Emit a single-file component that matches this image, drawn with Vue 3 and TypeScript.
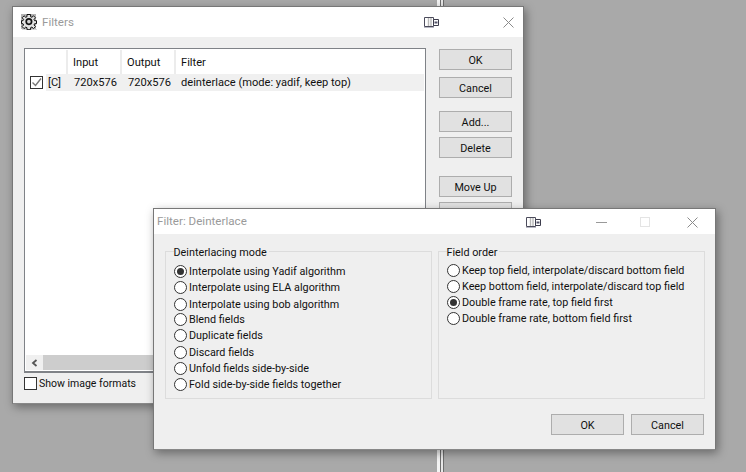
<script setup lang="ts">
interface Choice { label: string; checked: boolean }
const modes: Choice[] = [
  { label: 'Interpolate using Yadif algorithm', checked: true },
  { label: 'Interpolate using ELA algorithm', checked: false },
  { label: 'Interpolate using bob algorithm', checked: false },
  { label: 'Blend fields', checked: false },
  { label: 'Duplicate fields', checked: false },
  { label: 'Discard fields', checked: false },
  { label: 'Unfold fields side-by-side', checked: false },
  { label: 'Fold side-by-side fields together', checked: false },
]
const orders: Choice[] = [
  { label: 'Keep top field, interpolate/discard bottom field', checked: false },
  { label: 'Keep bottom field, interpolate/discard top field', checked: false },
  { label: 'Double frame rate, top field first', checked: true },
  { label: 'Double frame rate, bottom field first', checked: false },
]
</script>

<template>
  <div class="desktop">
    <div class="strip"></div>

    <section class="window filters">
      <header class="titlebar">
        <svg class="gear" width="16" height="16" viewBox="0 0 16 16">
          <rect x="0" y="0" width="15" height="15" fill="#b4b4b4" />
          <rect x="1" y="15" width="15" height="1" fill="#d8d8d8" />
          <path d="M6 1h3.600v2.200l1.300.6 1.600-1.500 2 2-1.500 1.600.6 1.300H15.500v3h-1.900l-.6 1.300 1.500 1.600-2 2-1.600-1.500-1.300.6v2H6v-2l-1.300-.6-1.600 1.500-2-2 1.500-1.600-.6-1.300H.5v-3h1.500l.6-1.300-1.500-1.600 2-2 1.600 1.500 1.300-.6z" transform="translate(0 -.5)" fill="#e2e2e2" stroke="#111" stroke-width="1" />
          <circle cx="7.900" cy="7.600" r="2.700" fill="#d4d4d4" stroke="#111" stroke-width="1.700" />
        </svg>
        <span class="title-text">Filters</span>
        <svg class="pin" width="16" height="11" viewBox="0 0 16 11">
          <path d="M1.500.5h9v9h-9z" fill="#fff" stroke="#4c4c5c" />
          <path d="M1 10.500h10" stroke="#b9b9c4" />
          <path d="M5.500 1v8M8 1v8" stroke="#b8b8b8" stroke-width="1.400" />
          <path d="M10.500 2.500h5v6h-5z" fill="#fff" stroke="#3c3c4c" />
          <path d="M11.500 4.500h3v2h-3z" fill="#55556a" />
        </svg>
        <svg class="close" width="11" height="11" viewBox="0 0 11 11">
          <path d="M.5.5l10 10M10.500.5l-10 10" stroke="#8a8a8a" fill="none" />
        </svg>
      </header>

      <div class="filters-body">
        <div class="list-column">
          <div class="list">
            <div class="list-head">
              <span class="col col-check"></span>
              <span class="col col-size">Input</span>
              <span class="col col-size">Output</span>
              <span class="col col-name">Filter</span>
            </div>
            <div class="list-row">
              <span class="row-check">
                <span class="checkbox">
                  <svg width="11" height="11" viewBox="0 0 11 11">
                    <path d="M1.500 5.500l3 3 5.500-7" fill="none" stroke="#777" stroke-width="1.400" />
                  </svg>
                </span>
              </span>
              <span class="row-body">
                <span class="cell-flag">[C]</span>
                <span class="cell-size">720x576</span>
                <span class="cell-size">720x576</span>
                <span class="cell-name">deinterlace (mode: yadif, keep top)</span>
              </span>
            </div>
            <div class="list-space"></div>
            <div class="hscroll">
              <span class="scroll-arrow">
                <svg width="7" height="8" viewBox="0 0 7 8">
                  <path d="M5.500 1L2 4l3.500 3" fill="none" stroke="#555" stroke-width="1.800" />
                </svg>
              </span>
              <span class="scroll-thumb"></span>
            </div>
          </div>
          <label class="show-formats">
            <span class="checkbox"></span>
            <span>Show image formats</span>
          </label>
        </div>

        <div class="side-buttons">
          <button class="btn first">OK</button>
          <button class="btn gap-ok">Cancel</button>
          <button class="btn gap-add">Add...</button>
          <button class="btn gap-del">Delete</button>
          <button class="btn gap-move">Move Up</button>
          <button class="btn gap-del">Move Down</button>
        </div>
      </div>
    </section>

    <section class="window deinterlace">
      <header class="titlebar small">
        <span class="title-text plain">Filter: Deinterlace</span>
        <svg class="pin two" width="16" height="11" viewBox="0 0 16 11">
          <path d="M1.500.5h9v9h-9z" fill="#fff" stroke="#4c4c5c" />
          <path d="M1 10.500h10" stroke="#b9b9c4" />
          <path d="M5.500 1v8M8 1v8" stroke="#b8b8b8" stroke-width="1.400" />
          <path d="M10.500 2.500h5v6h-5z" fill="#fff" stroke="#3c3c4c" />
          <path d="M11.500 4.500h3v2h-3z" fill="#55556a" />
        </svg>
        <span class="minimize"></span>
        <span class="maximize"></span>
        <svg class="close two" width="11" height="11" viewBox="0 0 11 11">
          <path d="M.5.5l10 10M10.500.5l-10 10" stroke="#8a8a8a" fill="none" />
        </svg>
      </header>

      <div class="groups">
        <fieldset class="group mode-group">
          <legend>Deinterlacing mode</legend>
          <div class="radio-list mode-list">
            <div v-for="m in modes" :key="m.label" class="radio-row">
              <span class="radio" :class="{ on: m.checked }"></span>
              <span>{{ m.label }}</span>
            </div>
          </div>
        </fieldset>
        <fieldset class="group order-group">
          <legend>Field order</legend>
          <div class="radio-list order-list">
            <div v-for="o in orders" :key="o.label" class="radio-row">
              <span class="radio" :class="{ on: o.checked }"></span>
              <span>{{ o.label }}</span>
            </div>
          </div>
        </fieldset>
      </div>

      <footer class="dialog-actions">
        <button class="btn">OK</button>
        <button class="btn">Cancel</button>
      </footer>
    </section>
  </div>
</template>

<style>
html, body { margin: 0; padding: 0; background: #a9a9a9; }
</style>

<style scoped>
.desktop {
  position: relative;
  width: 746px;
  height: 472px;
  overflow: hidden;
  background: #a9a9a9;
  font-family: Roboto, sans-serif;
  font-size: 10.8px;
  color: #101010;
}
.strip {
  position: absolute;
  left: 437px;
  top: 0;
  width: 8px;
  height: 472px;
  background: linear-gradient(90deg, #f4f4f4 0 3px, #6e6e6e 3px 4px, #e8e8e8 4px 6px, #6e6e6e 6px 7px, #a9a9a9 7px);
}
.window {
  position: absolute;
  box-sizing: border-box;
  display: flex;
  flex-direction: column;
  background: #efefef;
  border: 1px solid #777;
  border-bottom-color: #888;
  box-shadow: 2px 3px 9px rgba(0, 0, 0, 0.38);
}
.filters { left: 12px; top: 6px; width: 512px; height: 398px; }
.deinterlace { left: 153px; top: 208px; width: 563px; height: 242px; }

.titlebar {
  position: relative;
  display: flex;
  align-items: center;
  height: 30px;
  background: #fff;
  flex: none;
}
.titlebar.small { height: 25px; padding-bottom: 1px; box-sizing: border-box; }
.gear { margin-left: 8px; flex: none; }
.title-text { margin-left: 5px; font-size: 11.6px; color: #9a9a9a; }
.title-text.plain { margin-left: 3px; }
.pin { position: absolute; left: 410px; top: 10px; }
.close { position: absolute; left: 490px; top: 10px; }
.pin.two { left: 371px; top: 8px; }
.close.two { left: 533px; top: 8px; }
.minimize {
  position: absolute;
  left: 442px;
  top: 13px;
  width: 11px;
  height: 1px;
  background: #999;
}
.maximize {
  position: absolute;
  left: 486px;
  top: 8px;
  width: 8px;
  height: 8px;
  border: 1px solid #e4e4e4;
}

.filters-body {
  display: flex;
  padding: 11px 0 0 11px;
  flex: 1;
  min-height: 0;
}
.list-column { width: 402px; display: flex; flex-direction: column; }
.list {
  box-sizing: border-box;
  display: flex;
  flex-direction: column;
  height: 325px;
  border: 1px solid #7f8287;
  border-bottom-width: 2px;
  background: #fff;
  font-size: 11.1px;
}
.list-head { display: flex; height: 25px; padding-top: 1px; box-sizing: border-box; }
.col {
  box-sizing: border-box;
  height: 24px;
  line-height: 25px;
  padding-left: 5px;
  border-right: 2px solid #ececec;
}
.col-check { width: 43px; }
.col-size { width: 54px; }
.col-name { border-right: 0; flex: 1; }
.list-row { display: flex; height: 17px; line-height: 18px; }
.row-check { width: 21px; padding-left: 5px; box-sizing: border-box; display: flex; align-items: center; }
.row-body { flex: 1; display: flex; background: #f0f0f0; margin-right: 1px; }
.cell-flag { width: 27px; padding-left: 2px; box-sizing: border-box; }
.cell-size { width: 54px; padding-left: 1px; box-sizing: border-box; }
.cell-name { white-space: nowrap; }
.list-space { flex: 1; }
.hscroll { display: flex; height: 15px; margin: 0 1px 1px; background: #f0f0f0; }
.scroll-arrow { width: 17px; display: flex; align-items: center; justify-content: center; }
.scroll-thumb { width: 340px; background: #cdcdcd; }
.checkbox {
  box-sizing: border-box;
  display: flex;
  align-items: center;
  justify-content: center;
  width: 13px;
  height: 13px;
  border: 1px solid #333;
  background: #fff;
  flex: none;
}
.show-formats { display: flex; align-items: center; gap: 2px; margin-top: 3px; height: 14px; font-size: 10.5px; }

.side-buttons { display: flex; flex-direction: column; margin-left: 13px; width: 73px; }
.btn {
  box-sizing: border-box;
  width: 73px;
  height: 21px;
  padding: 1px 0 0;
  border: 1px solid #adadad;
  background: #e1e1e1;
  font: inherit;
  color: #101010;
  flex: none;
}
.side-buttons .first { margin-top: 1px; }
.gap-ok { margin-top: 7px; }
.gap-add { margin-top: 13px; }
.gap-del { margin-top: 5px; }
.gap-move { margin-top: 18px; }

.groups { display: flex; gap: 6px; padding: 9px 0 0 11px; }
.group {
  box-sizing: border-box;
  height: 156px;
  margin: 0;
  padding: 0 0 0 8px;
  border: 1px solid #dcdcdc;
  min-width: 0;
}
.mode-group { width: 267px; }
.order-group { width: 267px; }
legend { padding: 2px 2px 0 0; margin-left: -0.5px; line-height: 15px; }
.radio-list { display: grid; margin-top: 3px; }
.mode-list { grid-template-rows: 16px 17px 16px 15px 17px 16px 16px 16px; }
.order-list { grid-template-rows: repeat(4, 16px); margin-top: 2px; }
.radio-row { display: flex; align-items: center; gap: 2px; white-space: nowrap; }
.radio {
  box-sizing: border-box;
  position: relative;
  width: 13px;
  height: 13px;
  border: 1px solid #333;
  border-radius: 50%;
  background: #fff;
  flex: none;
}
.radio.on::after {
  content: "";
  position: absolute;
  left: 2px;
  top: 2px;
  width: 7px;
  height: 7px;
  border-radius: 50%;
  background: #333;
}
.dialog-actions {
  display: flex;
  justify-content: flex-end;
  gap: 7px;
  padding: 15px 11px 0 0;
}
</style>
